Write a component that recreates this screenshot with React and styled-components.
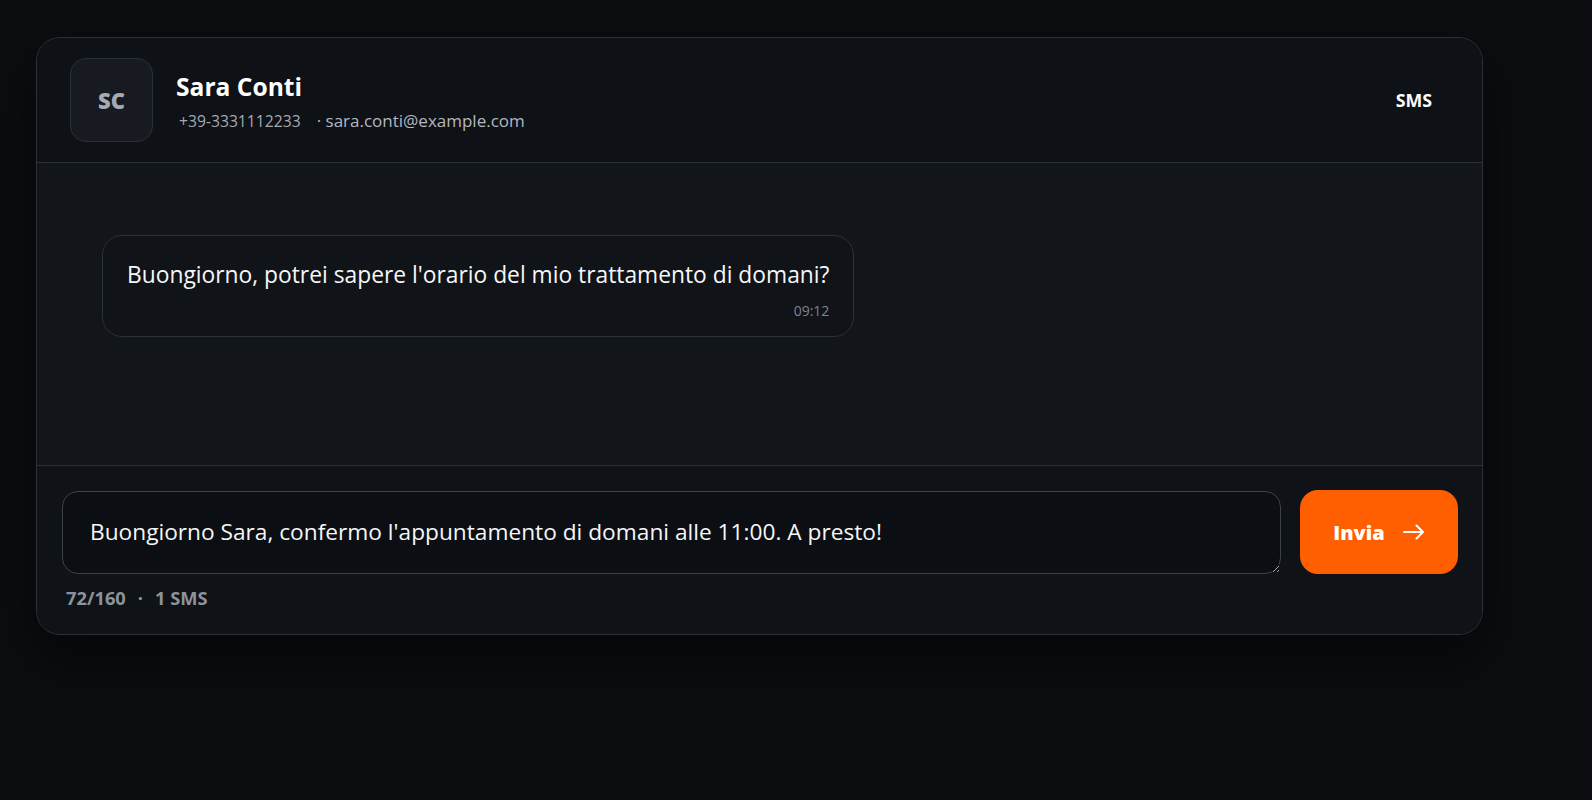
import React from 'react';
import styled, { createGlobalStyle } from 'styled-components';

const GlobalStyle = createGlobalStyle`
  html, body {
    margin: 0;
    background: #0b0d10;
    font-family: "Open Sans", "Noto Sans", "Liberation Sans", sans-serif;
    color: #f4f5f7;
  }
  * { box-sizing: border-box; }
`;

function Arrow() {
  return (
    <svg width="22" height="16" viewBox="0 0 22 16" fill="none" stroke="currentColor" strokeWidth="2" strokeLinecap="round" strokeLinejoin="round">
      <path d="M1 8h19M13.5 1.5L20 8l-6.5 6.5" />
    </svg>
  );
}

function App() {
  const draft = "Buongiorno Sara, confermo l'appuntamento di domani alle 11:00. A presto!";

  return (
    <Page>
      <GlobalStyle />
      <Card>
        <Header>
          <Avatar>SC</Avatar>
          <Info>
            <Name>Sara Conti</Name>
            <Meta>
              <Phone>+39-3331112233</Phone>
              <Email>· sara.conti@example.com</Email>
            </Meta>
          </Info>
          <Channel>SMS</Channel>
        </Header>

        <Messages>
          <Bubble>
            <BubbleText>Buongiorno, potrei sapere l'orario del mio trattamento di domani?</BubbleText>
            <Time>09:12</Time>
          </Bubble>
        </Messages>

        <Composer>
          <InputRow>
            <Input defaultValue={draft} />
            <SendButton>
              Invia
              <Arrow />
            </SendButton>
          </InputRow>
          <Counter>
            <span>{draft.length}/160</span>
            <span>·</span>
            <span>1 SMS</span>
          </Counter>
        </Composer>
      </Card>
    </Page>
  );
}

export default App;

const Page = styled.div`
  min-height: 100vh;
  padding: 37px 36px;
`;

const Card = styled.div`
  width: 1447px;
  border: 1px solid #2c3037;
  border-radius: 24px;
  background: #0f1216;
  overflow: hidden;
  box-shadow: 0 24px 60px rgba(0, 0, 0, 0.55);
`;

const Header = styled.header`
  display: flex;
  align-items: flex-start;
  gap: 23px;
  padding: 20px 32px 20px 33px;
  border-bottom: 1px solid #2c3037;
  background: #0e1115;
`;

const Avatar = styled.div`
  width: 83px;
  height: 84px;
  flex: none;
  display: flex;
  align-items: center;
  justify-content: center;
  border: 1px solid #2c3038;
  border-radius: 16px;
  background: #171a20;
  color: #a3aab5;
  font-size: 22px;
  font-weight: 800;
`;

const Info = styled.div`
  display: flex;
  flex-direction: column;
  padding-top: 13px;
`;

const Name = styled.div`
  font-size: 24.6px;
  font-weight: 700;
  line-height: 32px;
  color: #ffffff;
`;

const Meta = styled.div`
  display: flex;
  margin-top: 6px;
  line-height: 24px;
`;

const Phone = styled.span`
  font-size: 15.7px;
  color: #a5a9b0;
  margin: 0 16px 0 3px;
`;

const Email = styled.span`
  font-size: 17px;
  color: #b3b8c0;
`;

const Channel = styled.div`
  margin-left: auto;
  align-self: center;
  padding: 0 18px;
  font-size: 17.8px;
  font-weight: 700;
  color: #ffffff;
`;

const Messages = styled.div`
  min-height: 302px;
  padding: 72px 65px;
  background: #12151a;
`;

const Bubble = styled.div`
  display: inline-flex;
  flex-direction: column;
  max-width: 70%;
  padding: 24px 24px 15px;
  border: 1px solid #2c3037;
  border-radius: 20px;
  background: #101317;
`;

const BubbleText = styled.div`
  font-size: 22.8px;
  line-height: 30px;
  color: #f6f7f8;
`;

const Time = styled.div`
  align-self: flex-end;
  margin-top: 11px;
  font-size: 14px;
  line-height: 20px;
  color: #7d838c;
`;

const Composer = styled.div`
  padding: 24px;
  border-top: 1px solid #2c3037;
  background: #0f1216;
`;

const InputRow = styled.div`
  display: flex;
  align-items: center;
  gap: 19px;
`;

const Input = styled.textarea`
  flex: 1;
  height: 83px;
  margin-left: 1px;
  padding: 25px 26px 25px 27px;
  border: 1.5px solid #3d424a;
  border-radius: 16px;
  background: #0b0e12;
  color: #f6f7f8;
  font-family: inherit;
  font-size: 22.7px;
  line-height: 30px;
  resize: vertical;
  outline: none;
`;

const SendButton = styled.button`
  width: 158px;
  height: 84px;
  flex: none;
  display: flex;
  align-items: center;
  justify-content: center;
  gap: 18px;
  border: none;
  border-radius: 18px;
  background: #ff5f00;
  color: #ffffff;
  font-family: inherit;
  font-size: 20px;
  font-weight: 800;
  cursor: pointer;
`;

const Counter = styled.div`
  display: flex;
  gap: 12px;
  margin-top: 12px;
  padding-left: 5px;
  font-size: 18.3px;
  line-height: 24px;
  font-weight: 700;
  color: #8d939c;
`;
